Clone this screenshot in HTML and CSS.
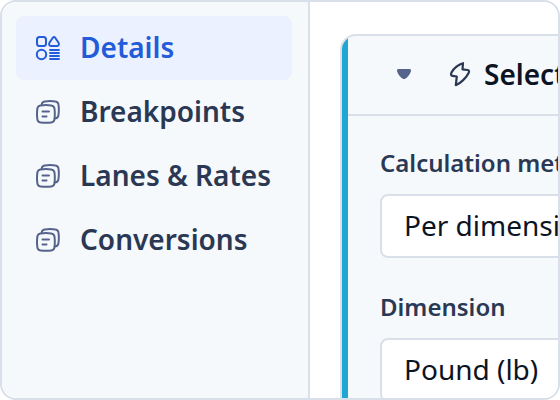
FILE: index.html
```html
<!DOCTYPE html>
<html lang="en">
<head>
    <meta charset="UTF-8">
    <meta name="viewport" content="width=device-width, initial-scale=1.0">
    <title>Details</title>
    <link rel="stylesheet" href="styles.css">
</head>
<body>
<svg class="sprite" aria-hidden="true">
    <symbol id="pages" viewBox="0 0 24 24">
        <path d="M5.600 4.800C5.900 3 6.900 1.900 8.600 1.600C12 1 16.500 1 19.500 1.600C21.200 1.900 22.300 3 22.500 4.700C23 8 22.900 12 22.400 15.500C22.100 17.300 21 18.300 18.600 18.500"/>
        <path d="M4.500 5.400C8 4.900 12 4.900 15.300 5.400C17.200 5.700 18.200 6.700 18.500 8.500C18.900 12 18.900 16 18.500 19.300C18.200 21.200 17.200 22.200 15.300 22.400C12 22.800 8 22.800 4.500 22.400C2.700 22.200 1.600 21.200 1.400 19.300C0.900 16 0.900 12 1.400 8.500C1.600 6.700 2.700 5.700 4.500 5.400Z"/>
        <path d="M6.500 11.500H13M6.500 16.500H10.500"/>
    </symbol>
</svg>
<div class="window">
    <nav class="sidebar">
        <a class="nav-item active" href="#details">
            <svg class="nav-icon" viewBox="0 0 24 24" aria-hidden="true">
                <rect x="1" y="1" width="9" height="9" rx="2.500"/>
                <path d="M16.800 1.800Q18 0.200 19.200 1.800L22.600 6.700Q23.600 9.800 21 10H15Q12.400 9.800 13.400 6.700Z"/>
                <circle cx="5.500" cy="18.500" r="4.700"/>
                <path class="lines" d="M14 14H23M14 17H23M14 20H23M14 23H23"/>
            </svg>
            Details
        </a>
        <a class="nav-item" href="#breakpoints">
            <svg class="nav-icon" aria-hidden="true"><use href="#pages"/></svg>
            Breakpoints
        </a>
        <a class="nav-item" href="#lanes">
            <svg class="nav-icon" aria-hidden="true"><use href="#pages"/></svg>
            Lanes &amp; Rates
        </a>
        <a class="nav-item" href="#conversions">
            <svg class="nav-icon" aria-hidden="true"><use href="#pages"/></svg>
            Conversions
        </a>
    </nav>
    <main class="content">
        <section class="card">
            <header class="card-header">
                <button class="toggle" type="button" aria-label="Collapse">
                    <svg class="caret" viewBox="0 0 16 12" aria-hidden="true">
                        <path d="M2.500 1H13.500Q15.500 1 15 3C14 6.500 11.800 8.800 9.500 10.600Q8 11.600 6.500 10.600C4.200 8.800 2 6.500 1 3Q0.500 1 2.500 1Z"/>
                    </svg>
                </button>
                <svg class="bolt" viewBox="0 0 24 24" aria-hidden="true">
                    <path d="M15 1.200C11 2.200 5.500 6.500 3.500 10.500C2.600 12.500 3 13.500 4.600 13.800L8.800 14.500L7.800 23.200C12.500 21.500 18.500 15.500 20.600 11C21.500 9 21 8.200 19.500 8L14.500 7.400Z"/>
                </svg>
                <h2 class="card-title">Select</h2>
            </header>
            <form class="card-body">
                <div class="field">
                    <label for="method">Calculation method</label>
                    <select id="method">
                        <option>Per dimension</option>
                    </select>
                </div>
                <div class="field">
                    <label for="dimension">Dimension</label>
                    <select id="dimension">
                        <option>Pound (lb)</option>
                    </select>
                </div>
            </form>
        </section>
    </main>
</div>
</body>
</html>
```

FILE: styles.css
```css
* {
    box-sizing: border-box;
}
body {
    margin: 0;
    background: white;
    color: #0c1424;
    font-family: "Noto Sans", sans-serif;
    font-size: 28px;
    line-height: 36px;
    overflow: hidden;
}
.sprite {
    display: none;
}
.window {
    display: flex;
    height: 100vh;
    border: 2px solid #d9e0e9;
    border-radius: 16px;
    overflow: hidden;
}
.sidebar {
    flex: 0 0 308px;
    display: flex;
    flex-direction: column;
    padding: 14px 16px 14px 14px;
    background: #f5f9fc;
    border-right: 2px solid #d9e0e9;
}
.nav-item {
    display: flex;
    align-items: center;
    gap: 20px;
    height: 64px;
    padding: 0 16px 2px 20px;
    border-radius: 8px;
    color: #2b3854;
    font-weight: 600;
    text-decoration: none;
    white-space: nowrap;
}
.nav-item.active {
    background: #ebf1fe;
    color: #235bd8;
}
.nav-icon {
    width: 24px;
    height: 24px;
    margin-top: 2px;
    fill: none;
    stroke: #56648c;
    stroke-width: 2;
    stroke-linecap: round;
    stroke-linejoin: round;
    overflow: visible;
}
.active .nav-icon {
    stroke: #235bd8;
}
.lines {
    stroke-width: 1.8;
}
.content {
    flex: 1;
    min-width: 0;
    padding: 32px 30px;
}
.card {
    min-width: 480px;
    background: linear-gradient(to right, #20a6d2 6px, #f5f9fc 6px);
    border: 2px solid #d9e0e9;
    border-radius: 16px;
    padding-left: 6px;
}
.card-header {
    display: flex;
    align-items: center;
    height: 80px;
    padding: 0 32px 2px;
    border-bottom: 2px solid #d9e0e9;
}
.toggle {
    display: flex;
    align-items: center;
    justify-content: center;
    width: 48px;
    height: 48px;
    margin-right: 20px;
    padding: 0;
    border: none;
    background: none;
}
.caret {
    width: 16px;
    height: 12px;
    fill: #56648c;
}
.bolt {
    width: 24px;
    height: 24px;
    margin-right: 12px;
    fill: none;
    stroke: #2b3854;
    stroke-width: 2.2;
    stroke-linejoin: round;
    overflow: visible;
}
.card-title {
    margin: 0;
    font-size: 28px;
    font-weight: 600;
}
.card-body {
    display: flex;
    flex-direction: column;
    gap: 32px;
    padding: 30px 32px;
}
.field {
    display: flex;
    flex-direction: column;
    gap: 14px;
}
label {
    color: #2b3854;
    font-size: 24px;
    font-weight: 600;
    line-height: 34px;
}
select {
    appearance: none;
    width: 100%;
    height: 64px;
    padding: 0 22px 2px;
    background: white;
    border: 2px solid #d9e0e9;
    border-radius: 8px;
    color: #0c1424;
    font: inherit;
}
```
